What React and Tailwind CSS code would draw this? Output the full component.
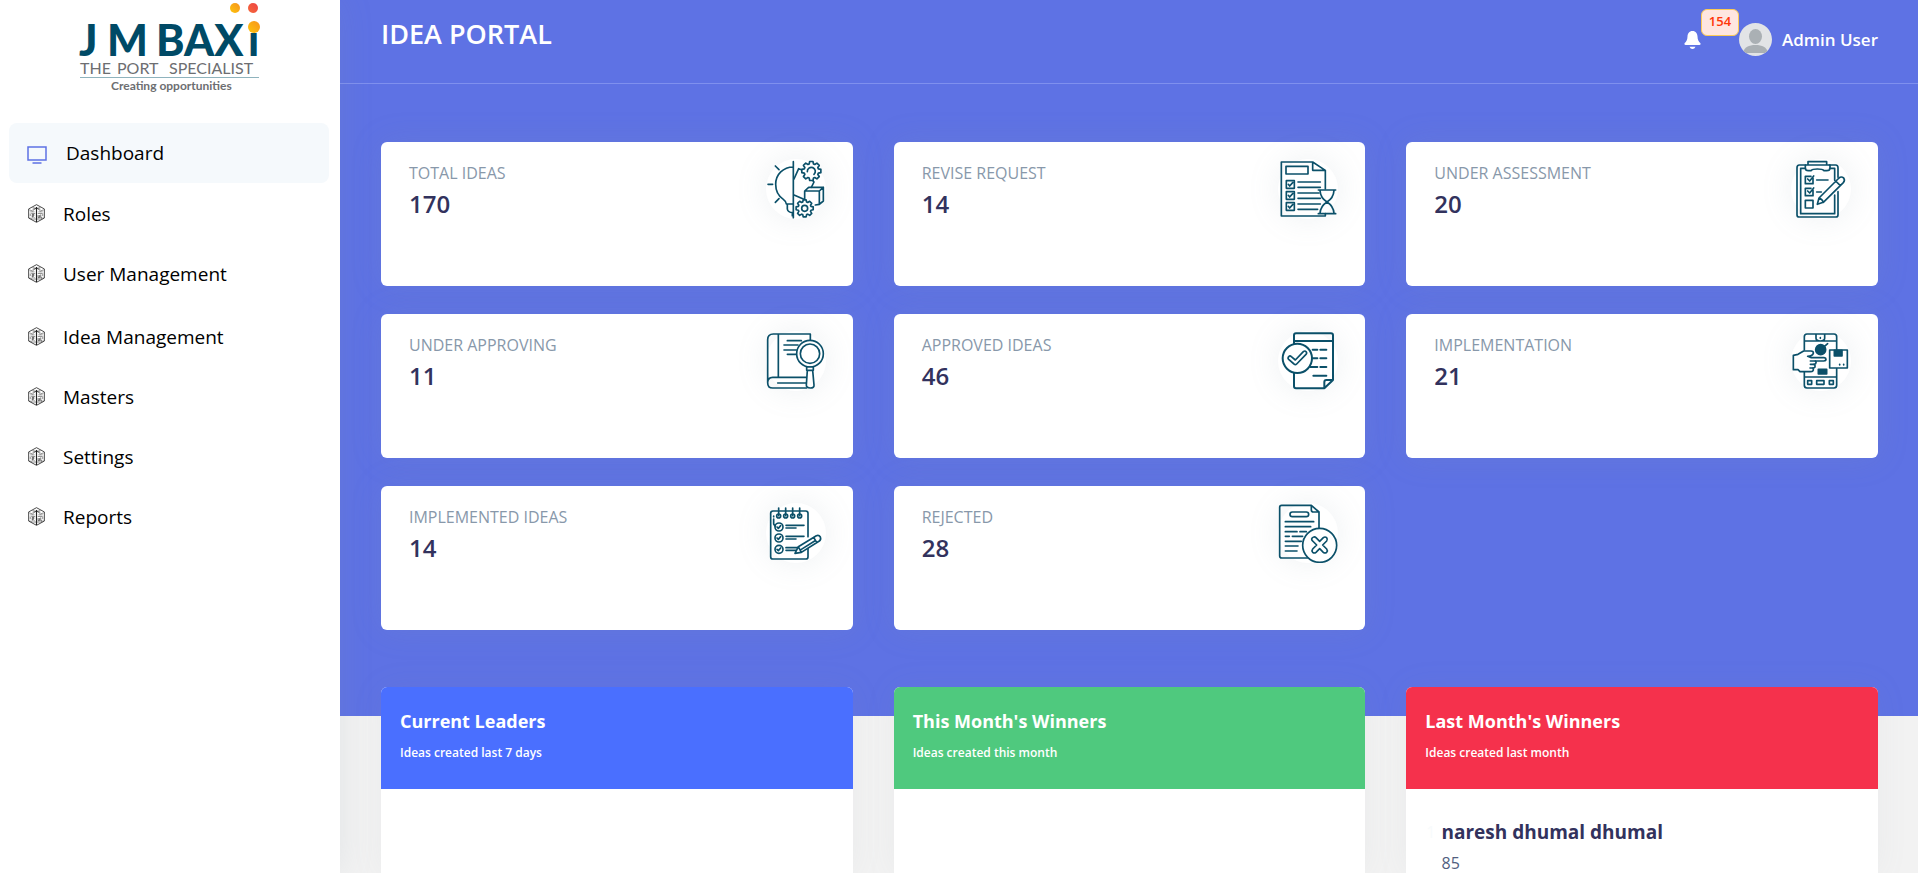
import React from "react";

const INK = "#0b5069";

function LightbulbGearIcon() {
  return (
    <StatSvg viewBox="78 58 180 180">
      <path d="M160 66V234M160 82C130 82 107 104 107 134C107 156 116 170 130 179C137 184 139 188 139 193H160M142 194V208Q143 218 158 219M157 219V228" />
      <path d="M106 79L117 90M84 134H98M106 188L117 177" />
      <path d="M162 118L176 87L197 95M162 166L190 178M206 108L222 127L214 143" />
      <g transform="translate(214 94)">
        <GearShape r={29} />
        <path d="M-12 2A12 12 0 1 1 8 10" />
      </g>
      <g transform="translate(194 206)">
        <GearShape r={26} />
        <circle r="9" />
      </g>
      <path d="M194 178V154H238V194L226 196M194 154L206 143H250V184L238 194M238 154L250 143" />
    </StatSvg>
  );
}

function GearShape({ r }) {
  const pts = [];
  for (let i = 0; i < 8; i++) {
    const a = (i * Math.PI) / 4;
    [[-0.3, 0.76], [-0.17, 1], [0.17, 1], [0.3, 0.76]].forEach(([d, k]) => {
      pts.push(`${(Math.sin(a + d) * r * k).toFixed(1)},${(-Math.cos(a + d) * r * k).toFixed(1)}`);
    });
  }
  return <polygon points={pts.join(" ")} fill="#fff" />;
}

function ReviseIcon() {
  return (
    <StatSvg viewBox="84 58 180 180">
      <path d="M226 148V92L188 67H94V229H226V222M188 67V92H226M108 80H174V103H108Z" />
      {[123, 156, 189].map((y) => (
        <path key={y} d={`M109 ${y}H133V${y + 23}H109ZM115 ${y + 11}L119 ${y + 16}L128 ${y + 6}`} />
      ))}
      <path d="M144 127H211M144 143H211M144 160H207M144 176H211M144 193H211M144 209H203" />
      <path d="M205 151H257M205 222H257M210 152C211 170 220 180 231 187C242 180 251 170 252 152M210 221C211 204 220 194 231 187C242 194 251 204 252 221" />
    </StatSvg>
  );
}

function AssessmentIcon() {
  return (
    <StatSvg viewBox="63 58 180 180">
      <path d="M107 76H88Q81 76 81 84V225Q81 232 88 232H197Q204 232 204 225V156M204 113V84Q204 76 197 76H178" />
      <path d="M106 86H92V222H194V166M194 122V86H179M114 76V66H170V76M106 76H180V84Q180 93 170 93H162Q158 88 142 88Q127 88 123 93H115Q106 93 106 84Z" />
      <path d="M129 114V132H106V110H123M113 118L119 124L131 109M129 150V168H106V146H123M113 154L119 160L131 145M106 182H129V205H106ZM140 121H174M140 157H154" />
      <path d="M142 194L147 175L207 115Q214 109 221 115Q226 122 220 129L160 188ZM147 175Q157 178 160 188M197 124L211 138" fill="#fff" />
    </StatSvg>
  );
}

function ApprovingIcon() {
  return (
    <StatSvg viewBox="78 49 180 180">
      <path d="M211 75V58H100Q83 58 83 75V204Q83 220 98 220H200M83 204Q83 188 98 188H198M115 58V188M113 205H198" />
      <path d="M142 78H184M132 91H174M132 106H169M142 119H169" />
      <circle cx="210" cy="117" r="40" fill="#fff" />
      <circle cx="210" cy="117" r="29" />
      <path d="M200 157H220V167H200ZM202 167L199 211Q199 220 211 220Q223 220 222 211L218 167" fill="#fff" />
    </StatSvg>
  );
}

function ApprovedIcon() {
  return (
    <StatSvg viewBox="84 49 180 180">
      <g strokeWidth="6">
        <path d="M132 88V62Q132 56 138 56H243Q249 56 249 62V196L223 221H138Q132 221 132 215V174M132 79H249M249 196H229Q223 196 223 202V221M188 105H202M211 105H229M188 131H202M211 131H229M181 157H202M211 157H229M190 183H229" />
        <circle cx="142" cy="131" r="44" fill="#fff" />
        <path d="M117 125Q120 122 124 126L136 136L160 111Q165 107 168 111Q172 115 168 119L140 148Q136 152 132 148L116 134Q112 130 117 125Z" strokeWidth="5" />
      </g>
    </StatSvg>
  );
}

function ImplementationIcon() {
  return (
    <StatSvg viewBox="63 49 180 180">
      <path d="M103 106V66Q103 58 111 58H192Q200 58 200 66V105M200 162V212Q200 220 192 220H111Q103 220 103 212V172M103 79H200M103 187H200M138 58V71Q138 79 151 79Q164 79 164 71V58M151 69V71" />
      <circle cx="152" cy="105" r="15" fill={INK} />
      <path d="M160 98L173 87" />
      <path d="M145 164H170V178H145Z" fill={INK} />
      <path d="M179 106H232V160H179Z" fill="#fff" />
      <path d="M193 107H216V124H193Z" fill={INK} />
      <path d="M209 149V151M221 149V151M113 198H125V209H113ZM140 198H162V209H140ZM178 198H190V209H178Z" />
      <path
        d="M70 122L84 119L101 109H123Q131 109 130 116Q127 124 113 125L124 129H162Q168 130 168 134Q168 139 161 139H136Q140 143 137 147Q135 149 132 149Q137 153 135 157Q133 160 129 160Q133 171 121 171H90L84 165H70Z"
        fill="#fff"
      />
      <path d="M121 139H136M121 149H132M120 160H129" />
    </StatSvg>
  );
}

function ImplementedIcon() {
  return (
    <StatSvg viewBox="78 55 180 180">
      <path d="M204 156V86Q204 79 197 79H99Q92 79 92 86V216Q92 223 99 223H197Q204 223 204 216V192M101 94V96M101 103V118L105 124" />
      {[116, 137, 158, 179].map((x) => (
        <g key={x}>
          <path d={`M${x} 70V93`} />
          <circle cx={x} cy="94" r="6" />
        </g>
      ))}
      {[127, 160, 194].map((y) => (
        <g key={y}>
          <circle cx="117" cy={y} r="12" />
          <path d={`M111 ${y}L115 ${y + 4}L122 ${y - 4}M138 ${y - 5}H192M138 ${y + 3}H168`} />
        </g>
      ))}
      <path d="M165 206L175 186L229 153Q237 150 241 157Q244 164 238 169L184 203ZM175 186L184 203M221 158L230 173M184 194L224 169" fill="#fff" />
    </StatSvg>
  );
}

function RejectedIcon() {
  return (
    <StatSvg viewBox="84 55 180 180">
      <path d="M207 132V82L184 62H95Q89 62 89 68V214Q89 220 95 220H172M184 62V76Q184 82 190 82H207" />
      <rect x="120" y="82" width="56" height="14" rx="7" />
      <path d="M106 111H191M106 126H182M106 141H141M150 141H169M106 155H118M127 155H158M106 170H154M106 184H144M106 199H141" />
      <circle cx="209" cy="182" r="51" fill="#fff" />
      <path d="M191 157Q186 158 185 163Q185 167 188 169L200 181L188 193Q184 198 188 203Q193 207 198 203L209 192L220 203Q225 207 230 203Q234 198 230 193L218 181L230 169Q234 164 230 159Q225 155 220 159L209 170L198 159Q195 156 191 157Z" />
    </StatSvg>
  );
}

function StatSvg({ viewBox, children }) {
  return (
    <svg
      viewBox={viewBox}
      className="size-full"
      fill="none"
      stroke={INK}
      strokeWidth="5"
      strokeLinecap="round"
      strokeLinejoin="round"
      aria-hidden="true"
    >
      {children}
    </svg>
  );
}

function Logo() {
  return (
    <svg viewBox="0 0 184 96" className="h-24 w-46" role="img" aria-label="JM Baxi">
      <defs>
        <linearGradient id="amber" x1="0" y1="1" x2="1" y2="0">
          <stop offset="0" stopColor="#fdc50b" />
          <stop offset="1" stopColor="#f7931e" />
        </linearGradient>
        <linearGradient id="coral" x1="0" y1="1" x2="1" y2="0">
          <stop offset="0" stopColor="#f5693a" />
          <stop offset="1" stopColor="#ee4444" />
        </linearGradient>
      </defs>
      <g className="font-['Lato'] font-black" fontSize="43" fill="#004a66">
        <text x="3" y="56">J</text>
        <text x="31" y="56">M</text>
        <text x="80" y="56">BAX</text>
        <text x="172" y="56">i</text>
      </g>
      <circle cx="159" cy="8" r="5" fill="url(#amber)" />
      <circle cx="177" cy="8" r="5" fill="url(#coral)" />
      <circle cx="178" cy="27" r="6" fill="url(#amber)" />
      <g className="font-['Lato']" fontSize="16" fill="#6d6e71">
        <text x="4" y="74">THE</text>
        <text x="41" y="74">PORT</text>
        <text x="93" y="74">SPECIALIST</text>
      </g>
      <path d="M4 77.5H183" stroke="#8fb3bd" />
      <text x="35" y="90" className="font-['Lato'] font-bold" fontSize="12" fill="#6d6e71">
        Creating opportunities
      </text>
    </svg>
  );
}

function MonitorIcon() {
  return (
    <svg viewBox="0 0 20 18" className="h-[18px] w-5" fill="none" stroke="#5e72e4" aria-hidden="true">
      <path d="M1 1H19V14H1ZM5.500 17H14.500" strokeWidth="1.500" />
    </svg>
  );
}

function RolesIcon() {
  return (
    <svg viewBox="0 0 52 56" className="h-[19px] w-[17px]" fill="none" stroke="#222" strokeWidth="2.500" aria-hidden="true">
      <path d="M26 1L50 14V42L26 55L2 42V14Z" />
      <path d="M26 8V54" strokeWidth="3.500" />
      <path d="M4 17L14 20L26 10L38 20L48 17M7 23H20M32 23H45M10 28H22M30 28H44M4 41L14 45H38L48 41M14 10L38 15M38 10L14 15M7 28V36M45 28V36" strokeWidth="1.500" />
      <path d="M13 41V31H18Q21 34 14 36L20 41M31 33V41H35V33M39 31V41H43" strokeWidth="2" />
    </svg>
  );
}

function BellIcon() {
  return (
    <svg viewBox="0 0 17 18" className="h-[18px] w-[17px]" fill="#fff" aria-hidden="true">
      <path d="M8.500 0C11.800 0 13.400 2.500 13.500 5.500C13.600 9 14.600 10.700 16.500 12.300Q17 14 15.500 14H1.500Q0 14 .5 12.300C2.400 10.700 3.400 9 3.500 5.500C3.600 2.500 5.200 0 8.500 0ZM5.500 15.800H11.500Q10.500 18 8.500 18Q6.500 18 5.500 15.800Z" />
    </svg>
  );
}

function Avatar() {
  return (
    <svg viewBox="0 0 33 33" className="size-[33px] rounded-full" aria-hidden="true">
      <path d="M0 0H33V33H0Z" fill="#e2e4e6" />
      <ellipse cx="16.500" cy="13.500" rx="6.500" ry="7.500" fill="#aab0b4" />
      <path d="M4 30C5 24 10 22 16.500 22C23 22 28 24 29 30Z" fill="#aab0b4" />
    </svg>
  );
}

const navGroups = [["Roles", "User Management"], ["Idea Management", "Masters", "Settings", "Reports"]];

const stats = [
  ["TOTAL IDEAS", 170, LightbulbGearIcon],
  ["REVISE REQUEST", 14, ReviseIcon],
  ["UNDER ASSESSMENT", 20, AssessmentIcon],
  ["UNDER APPROVING", 11, ApprovingIcon],
  ["APPROVED IDEAS", 46, ApprovedIcon],
  ["IMPLEMENTATION", 21, ImplementationIcon],
  ["IMPLEMENTED IDEAS", 14, ImplementedIcon],
  ["REJECTED", 28, RejectedIcon],
];

const boards = [
  { title: "Current Leaders", note: "Ideas created last 7 days", tone: "bg-[#4a6fff]", people: [] },
  { title: "This Month's Winners", note: "Ideas created this month", tone: "bg-[#4fc97e]", people: [] },
  {
    title: "Last Month's Winners",
    note: "Ideas created last month",
    tone: "bg-[#f5314c]",
    people: [{ name: "naresh dhumal dhumal", score: 85 }],
  },
];

function Sidebar() {
  return (
    <aside className="z-10 w-[340px] shrink-0 bg-white shadow-[0_0_32px_rgba(136,152,170,0.15)]">
      <a href="#home" className="flex h-[123px] justify-center pr-1">
        <Logo />
      </a>
      <nav className="flex flex-col gap-[3px] pr-[11px] pl-[9px] text-[19px] text-black">
        <div>
          <a href="#dashboard" aria-current="page" className="flex h-15 items-center gap-[19px] rounded-lg bg-[#f5f9fc] pl-[18px]">
            <span className="pt-1"><MonitorIcon /></span>
            Dashboard
          </a>
          {navGroups[0].map((name) => <NavItem key={name} name={name} />)}
        </div>
        <div>
          {navGroups[1].map((name) => <NavItem key={name} name={name} />)}
        </div>
      </nav>
    </aside>
  );
}

function NavItem({ name }) {
  return (
    <a href="#section" className="flex h-15 items-center gap-[18px] pl-[19px]">
      <RolesIcon />
      <span className="pt-0.5">{name}</span>
    </a>
  );
}

export default function App() {
  return (
    <div className="flex min-h-screen bg-[#f2f2f2] font-['Open_Sans','Noto_Sans',sans-serif]">
      <Sidebar />
      <main className="flex min-w-0 flex-1 flex-col">
        <div className="bg-[#5e72e4] pb-[86px]">
          <header className="flex h-[84px] items-start justify-between border-b border-[#7f90ee] pr-10 pl-[41px] text-white">
            <h1 className="pt-4 text-[27px] leading-9 font-semibold">IDEA PORTAL</h1>
            <div className="flex items-center pt-[23px]">
              <button type="button" aria-label="Notifications" className="relative mr-[38px]">
                <BellIcon />
                <span className="absolute -top-[22px] left-[17px] flex h-[27px] w-[38px] items-center justify-center rounded-md border border-[#fccb55] bg-[#fee6e0] text-[13px] font-semibold text-[#ff3709]">
                  154
                </span>
              </button>
              <button type="button" className="flex items-center gap-2.5 text-[17px] font-semibold">
                <Avatar />
                Admin User
              </button>
            </div>
          </header>
          <section className="grid grid-cols-3 gap-x-[41px] gap-y-7 pt-[58px] pr-10 pl-[41px]">
            {stats.map(([label, value, Icon]) => (
              <article
                key={label}
                className="flex h-36 items-start justify-between rounded-md bg-white pt-[17px] pr-[27px] pl-7 shadow-[0_0_32px_rgba(136,152,170,0.15)]"
              >
                <div className="pt-0.5">
                  <h2 className="text-base leading-6 text-[#8898aa]">{label}</h2>
                  <p className="pt-px text-2xl leading-9 font-semibold text-[#32325d]">{value}</p>
                </div>
                <div className="size-15 shrink-0 rounded-full bg-white shadow-[0_0_32px_rgba(136,152,170,0.15)]">
                  <Icon />
                </div>
              </article>
            ))}
          </section>
        </div>
        <section className="-mt-[29px] grid flex-1 grid-cols-3 gap-x-[41px] pr-10 pl-[41px]">
          {boards.map(({ title, note, tone, people }) => (
            <article key={title} className="overflow-hidden rounded-t-md bg-white shadow-[0_0_32px_rgba(136,152,170,0.08)]">
              <div className={`${tone} h-[102px] px-[19px] pt-5 text-white`}>
                <h2 className="text-lg leading-7 font-bold">{title}</h2>
                <p className="pt-2 text-xs leading-5 font-semibold">{note}</p>
              </div>
              <ol className="px-5 pt-[29px]">
                {people.map(({ name, score }, i) => (
                  <li key={name} className="flex gap-1.5">
                    <span className="text-base leading-7 text-[#f8fbfc]">{i + 1}</span>
                    <div>
                      <h3 className="text-[19px] leading-7 font-bold text-[#32325d]">{name}</h3>
                      <p className="pt-[7px] text-base leading-5 text-[#525f7f]">{score}</p>
                    </div>
                  </li>
                ))}
              </ol>
            </article>
          ))}
        </section>
      </main>
    </div>
  );
}
